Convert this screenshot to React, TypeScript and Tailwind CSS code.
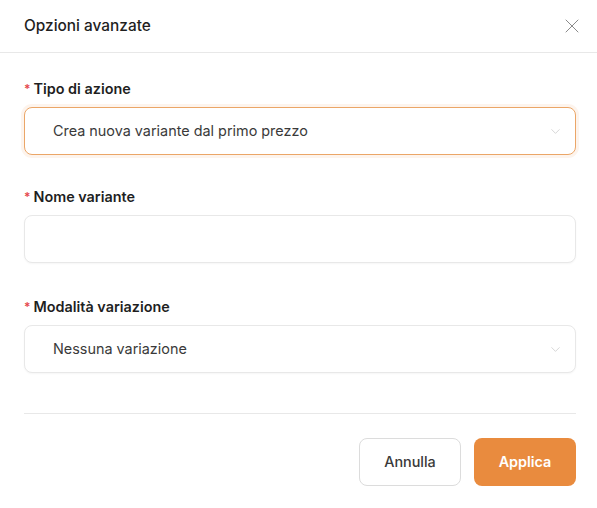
import { X, ChevronDown } from "lucide-react";

const Label = ({ text }: { text: string }) => (
  <div className="flex h-5 items-center text-[14.4px] font-semibold text-[#1f1f1f]">
    <span className="mr-[3px] text-[12px] text-[#e5484d]">*</span>
    {text}
  </div>
);

const Select = ({ value, focused }: { value: string; focused?: boolean }) => (
  <div
    className={
      focused
        ? "mt-2 flex h-12 items-center justify-between rounded-lg border border-[#eba667] bg-white pl-7 pr-3 shadow-[0_0_0_3px_rgba(235,166,103,0.12)]"
        : "mt-2 flex h-12 items-center justify-between rounded-lg border border-[#e8e8e8] bg-white pl-7 pr-3 shadow-[0_1px_2px_rgba(0,0,0,0.04)]"
    }
  >
    <span className="text-[14.4px] text-[#3a3a3a]">{value}</span>
    <ChevronDown size={15} strokeWidth={1.1} className="text-[#c4c4c4]" />
  </div>
);

export default function App() {
  return (
    <div
      className="min-h-screen w-full bg-white"
      style={{ fontFamily: "Inter, 'Noto Sans', sans-serif" }}
    >
      <div className="flex h-[53px] items-center justify-between border-b border-[#e8e8e8] pl-6 pr-[13px]">
        <h2 className="text-[15.4px] font-medium text-[#1f1f1f]">Opzioni avanzate</h2>
        <X size={24} strokeWidth={1} className="text-[#8a8a8a]" />
      </div>

      <div className="pl-6 pr-[21px] pt-[26px]">
        <Label text="Tipo di azione" />
        <Select value="Crea nuova variante dal primo prezzo" focused />

        <div className="mt-8">
          <Label text="Nome variante" />
          <div className="mt-2 h-12 rounded-lg border border-[#e8e8e8] bg-white shadow-[0_1px_2px_rgba(0,0,0,0.04)]" />
        </div>

        <div className="mt-[34px]">
          <Label text="Modalità variazione" />
          <Select value="Nessuna variazione" />
        </div>

        <div className="mt-10 border-t border-[#e8e8e8]" />

        <div className="flex justify-end gap-[13px] pt-[24px]">
          <button className="h-12 w-[102px] rounded-lg border border-[#dcdcdc] bg-white text-[14.4px] font-medium text-[#3a3a3a]">
            Annulla
          </button>
          <button className="h-12 w-[102px] rounded-lg bg-[#e98b3e] text-[14.4px] font-semibold text-white">
            Applica
          </button>
        </div>
      </div>
    </div>
  );
}
